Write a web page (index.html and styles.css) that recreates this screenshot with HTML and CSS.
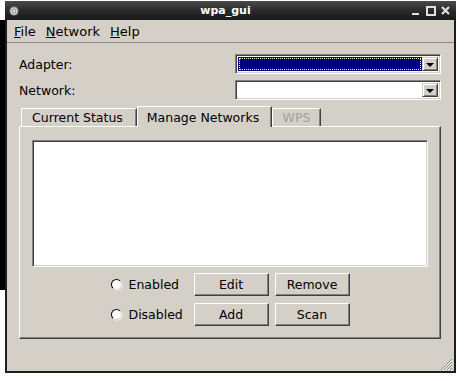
FILE: index.html
```html
<!DOCTYPE html>
<html lang="en">
<head>
  <meta charset="UTF-8">
  <title>wpa_gui</title>
  <link rel="stylesheet" href="styles.css">
</head>
<body>
  <div class="screen">
    <div class="desk-edge"></div>
    <div class="window">
      <div class="titlebar">
        <svg class="app-icon" width="10" height="10" viewBox="0 0 10 10">
          <circle cx="5" cy="5" r="4.5" fill="#9a9a9a"/>
          <circle cx="5" cy="5" r="3" fill="none" stroke="#d8d8d8" stroke-width="1"/>
          <circle cx="5" cy="5" r="1.2" fill="#e8e8e8"/>
        </svg>
        <span class="title">wpa_gui</span>
        <svg class="controls" width="38" height="10" viewBox="0 0 38 10">
          <rect x="0" y="7" width="7" height="2" fill="#e0e0e0"/>
          <rect x="15" y="1" width="8" height="8" fill="none" stroke="#e0e0e0" stroke-width="2"/>
          <path d="M30 1 L37 8 M37 1 L30 8" stroke="#e0e0e0" stroke-width="2.2"/>
        </svg>
      </div>

      <div class="menubar">
        <span class="menu"><u>F</u>ile</span>
        <span class="menu"><u>N</u>etwork</span>
        <span class="menu"><u>H</u>elp</span>
      </div>

      <div class="content">
        <div class="form-row">
          <span class="label">Adapter:</span>
          <div class="combo">
            <div class="combo-field selected"><div class="focus"></div></div>
            <div class="combo-btn"><span class="arrow"></span></div>
          </div>
        </div>
        <div class="form-row">
          <span class="label">Network:</span>
          <div class="combo">
            <div class="combo-field"></div>
            <div class="combo-btn"><span class="arrow"></span></div>
          </div>
        </div>

        <div class="tabs">
          <div class="tab first">Current Status</div>
          <div class="tab active">Manage Networks</div>
          <div class="tab disabled">WPS</div>
        </div>

        <div class="panel">
          <div class="listbox"></div>
          <div class="actions">
            <label class="radio"><span class="dot"></span>Enabled</label>
            <div class="button">Edit</div>
            <div class="button">Remove</div>
            <label class="radio"><span class="dot"></span>Disabled</label>
            <div class="button">Add</div>
            <div class="button">Scan</div>
          </div>
        </div>

        <div class="statusbar">
          <svg class="grip" width="13" height="13" viewBox="0 0 13 13">
            <path d="M12 1 L1 12 M12 4 L4 12 M12 7 L7 12 M12 10 L10 12" stroke="#808080" stroke-width="1"/>
            <path d="M12 2 L2 12 M12 5 L5 12 M12 8 L8 12 M12 11 L11 12" stroke="#ffffff" stroke-width="1"/>
          </svg>
        </div>
      </div>
    </div>
  </div>
</body>
</html>
```

FILE: styles.css
```css
:root {
  --face: #d4d0c8;
  --dark: #404040;
  --shadow: #808080;
  --light: #ffffff;
  --frame: #1e1e1e;
}

body {
  margin: 0;
  background-color: #ffffff;
  font-family: "DejaVu Sans", sans-serif;
  font-size: 12px;
  color: #000000;
}

.screen {
  display: flex;
  align-items: flex-start;
}

.desk-edge {
  width: 5px;
  height: 270px;
  margin-top: 20px;
  background-color: #000000;
}

.window {
  width: 451px;
  margin-top: 1px;
  box-sizing: border-box;
  border: 2px solid var(--frame);
  border-top: none;
  background-color: var(--face);
}

.titlebar {
  height: 19px;
  display: flex;
  align-items: center;
  padding: 0 6px 0 4px;
  margin: 0 -2px;
  background: linear-gradient(#4a4a4a, #262626 60%, #1a1a1a);
}

.app-icon {
  flex: none;
}

.title {
  flex: 1;
  text-align: center;
  color: #ffffff;
  font-weight: bold;
  font-size: 11px;
  padding-left: 20px;
}

.controls {
  flex: none;
  margin-top: 1px;
}

.menubar {
  height: 22px;
  display: flex;
  align-items: center;
  gap: 10px;
  padding-left: 7px;
  border-bottom: 1px solid #8a8a8a;
  font-size: 13px;
}

.content {
  padding-top: 11px;
}

.form-row {
  display: flex;
  align-items: center;
  justify-content: space-between;
  padding: 0 13px 0 12px;
  margin-bottom: 6px;
}

.label {
  font-size: 12.5px;
}

.combo {
  width: 206px;
  height: 20px;
  box-sizing: border-box;
  display: flex;
  border: 1px solid;
  border-color: var(--shadow) var(--light) var(--light) var(--shadow);
  box-shadow: inset 1px 1px var(--dark), inset -1px -1px var(--face);
  padding: 2px;
  background-color: #ffffff;
}

.combo-field {
  flex: 1;
  display: flex;
}

.combo-field.selected {
  background-color: #000080;
  padding: 1px;
}

.focus {
  flex: 1;
  border: 1px dotted #ffffc8;
}

.combo-btn {
  width: 16px;
  display: flex;
  align-items: center;
  justify-content: center;
  box-sizing: border-box;
  background-color: var(--face);
  border: 1px solid;
  border-color: var(--face) var(--dark) var(--dark) var(--face);
  box-shadow: inset 1px 1px var(--light), inset -1px -1px var(--shadow);
}

.arrow {
  width: 0;
  height: 0;
  border-left: 4px solid transparent;
  border-right: 4px solid transparent;
  border-top: 4px solid #000000;
  margin-top: 1px;
}

.tabs {
  display: flex;
  align-items: flex-end;
  height: 20px;
  margin: 0 13px 0 12px;
  position: relative;
  z-index: 1;
}

.tab {
  height: 18px;
  box-sizing: border-box;
  display: flex;
  align-items: center;
  justify-content: center;
  font-size: 12.5px;
  border: 1px solid;
  border-bottom: none;
  border-color: var(--light) var(--dark) var(--face) var(--light);
  box-shadow: inset -1px 0 var(--shadow);
}

.tab.first {
  width: 116px;
  margin-left: 2px;
  padding-right: 3px;
}

.tab.active {
  width: 135px;
  height: 21px;
  margin-bottom: -1px;
  padding-right: 3px;
  background-color: var(--face);
}

.tab.disabled {
  width: 49px;
  color: #a0a0a0;
}

.panel {
  height: 213px;
  box-sizing: border-box;
  margin: 0 13px 0 12px;
  border: 1px solid;
  border-color: var(--light) var(--dark) var(--dark) var(--light);
  box-shadow: inset -1px -1px var(--shadow);
  padding: 13px 12px 0 12px;
}

.listbox {
  height: 127px;
  box-sizing: border-box;
  background-color: #ffffff;
  border: 1px solid;
  border-color: var(--shadow) var(--light) var(--light) var(--shadow);
  box-shadow: inset 1px 1px var(--dark), inset -1px -1px var(--face);
}

.actions {
  display: grid;
  grid-template-columns: 77px 75px 75px;
  grid-auto-rows: 23px;
  column-gap: 6px;
  row-gap: 7px;
  justify-content: center;
  margin-top: 6px;
}

.radio {
  display: flex;
  align-items: center;
  gap: 7px;
  font-size: 12.5px;
}

.dot {
  width: 11px;
  height: 11px;
  box-sizing: border-box;
  border-radius: 50%;
  background-color: #ffffff;
  border: 1.5px solid;
  border-color: #000000 var(--face) var(--face) #000000;
  box-shadow: 0.5px 0.5px 0 var(--light);
}

.button {
  box-sizing: border-box;
  display: flex;
  align-items: center;
  justify-content: center;
  font-size: 12.5px;
  border: 1px solid;
  border-color: var(--light) var(--dark) var(--dark) var(--light);
  box-shadow: inset -1px -1px var(--shadow);
}

.statusbar {
  height: 32px;
  display: flex;
  align-items: flex-end;
  justify-content: flex-end;
}

.grip {
  display: block;
  margin-right: 1px;
}
```
